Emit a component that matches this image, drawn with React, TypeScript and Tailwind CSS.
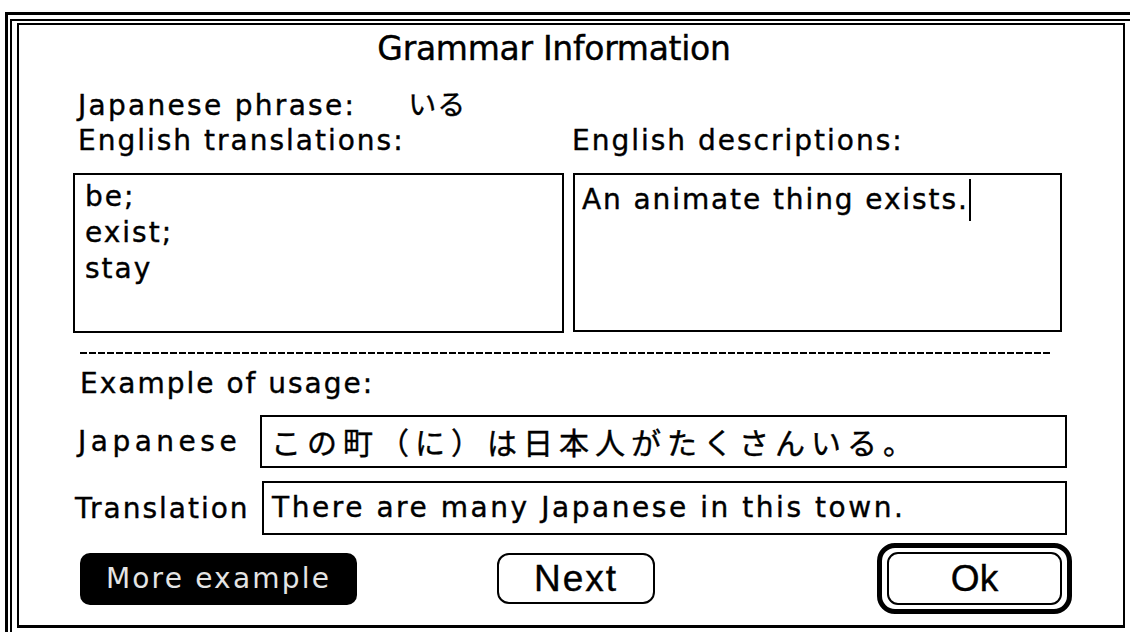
import React from "react";

const SANS = "font-['DejaVu_Sans','Noto_Sans_CJK_JP',sans-serif]";
const BTN = "font-['Liberation_Sans',Arial,sans-serif]";
const JP = "font-['Noto_Sans_CJK_JP',sans-serif]";

export default function App() {
  return (
    <div className={`w-[1130px] h-[632px] bg-white overflow-hidden text-black [-webkit-text-stroke:0.4px_currentColor] ${SANS}`}>
      <div className="ml-[5px] mt-[12px] w-[1150px] h-[640px] border-[3px] border-black pl-[2px] pt-[4px]">
        <div className="w-[1140px] h-[630px] border-2 border-black pl-[5px] pt-[2px]">
          <div className="w-[1108px] h-[605px] border-2 border-b-[3px] border-black flex flex-col">
            {/* Title */}
            <div className="mt-[4px] h-[40px] leading-[40px] text-[33px] text-center pr-[34px] tracking-[-0.3px] whitespace-nowrap">
              Grammar Information
            </div>

            {/* Japanese phrase */}
            <div className="mt-[17px] h-[35px] leading-[35px] text-[28px] tracking-[2.3px] pl-[59px] whitespace-nowrap">
              Japanese phrase:
              <span className={`ml-[52px] tracking-[1px] text-[28px] ${JP}`}>いる</span>
            </div>

            {/* Labels */}
            <div className="mt-[2px] h-[35px] leading-[35px] text-[28px] tracking-[2px] flex whitespace-nowrap">
              <div className="w-[553px] pl-[59px]">English translations:</div>
              <div>English descriptions:</div>
            </div>

            {/* Boxes */}
            <div className="mt-[15px] flex pl-[54px] gap-[9px]">
              <div className="w-[491px] h-[160px] border-2 border-black pl-[10px] pt-[4px] text-[28px] leading-[36px] tracking-[2px]">
                <div>be;</div>
                <div>exist;</div>
                <div>stay</div>
              </div>
              <div className="w-[489px] h-[159px] border-2 border-black pl-[7px] pt-[4px] text-[28px] leading-[36px] tracking-[1.9px] whitespace-nowrap">
                An animate thing exists.
                <span className="inline-block w-[2px] h-[42px] bg-black align-[-12px]" />
              </div>
            </div>

            {/* Dashed separator */}
            <div className="mt-[19px] ml-[61px] w-[970px] h-[2px] bg-[repeating-linear-gradient(90deg,#000_0_7px,transparent_7px_9px)]" />

            {/* Example of usage */}
            <div className="mt-[12px] h-[35px] leading-[35px] text-[28px] tracking-[2px] pl-[61px] whitespace-nowrap">
              Example of usage:
            </div>

            {/* Japanese row */}
            <div className="mt-[14px] flex items-center h-[53px]">
              <div className="w-[241px] pl-[59px] text-[28px] leading-[35px] tracking-[4.5px] whitespace-nowrap">Japanese</div>
              <div className={`w-[807px] h-[53px] border-2 border-black flex items-center pl-[9px] whitespace-nowrap text-[30px] tracking-[6px] ${JP}`}>
                この町（に）は日本人がたくさんいる。
              </div>
            </div>

            {/* Translation row */}
            <div className="mt-[13px] flex items-center h-[54px]">
              <div className="w-[243px] pl-[56px] text-[28px] leading-[35px] tracking-[2px] whitespace-nowrap">Translation</div>
              <div className="w-[805px] h-[54px] border-2 border-black flex items-center pl-[8px] whitespace-nowrap text-[28px] tracking-[2.55px]">
                There are many Japanese in this town.
              </div>
            </div>

            {/* Buttons */}
            <div className="mt-[8px] flex items-center h-[71px] pl-[61px]">
              <div className="w-[277px] h-[52px] rounded-[10px] bg-black text-[#e4e4e4] [-webkit-text-stroke:0px] flex items-center justify-center text-[28px] tracking-[2.2px] whitespace-nowrap">
                More example
              </div>
              <div className={`ml-[140px] w-[158px] h-[51px] rounded-[12px] border-2 border-black flex items-center justify-center text-[37px] tracking-[2px] ${BTN}`}>
                Next
              </div>
              <div className="ml-[222px] w-[195px] h-[71px] rounded-[18px] border-[5px] border-black px-[5px] py-[4px]">
                <div className={`w-full h-full rounded-[11px] border-2 border-black flex items-center justify-center text-[37px] ${BTN}`}>
                  Ok
                </div>
              </div>
            </div>
          </div>
        </div>
      </div>
    </div>
  );
}
